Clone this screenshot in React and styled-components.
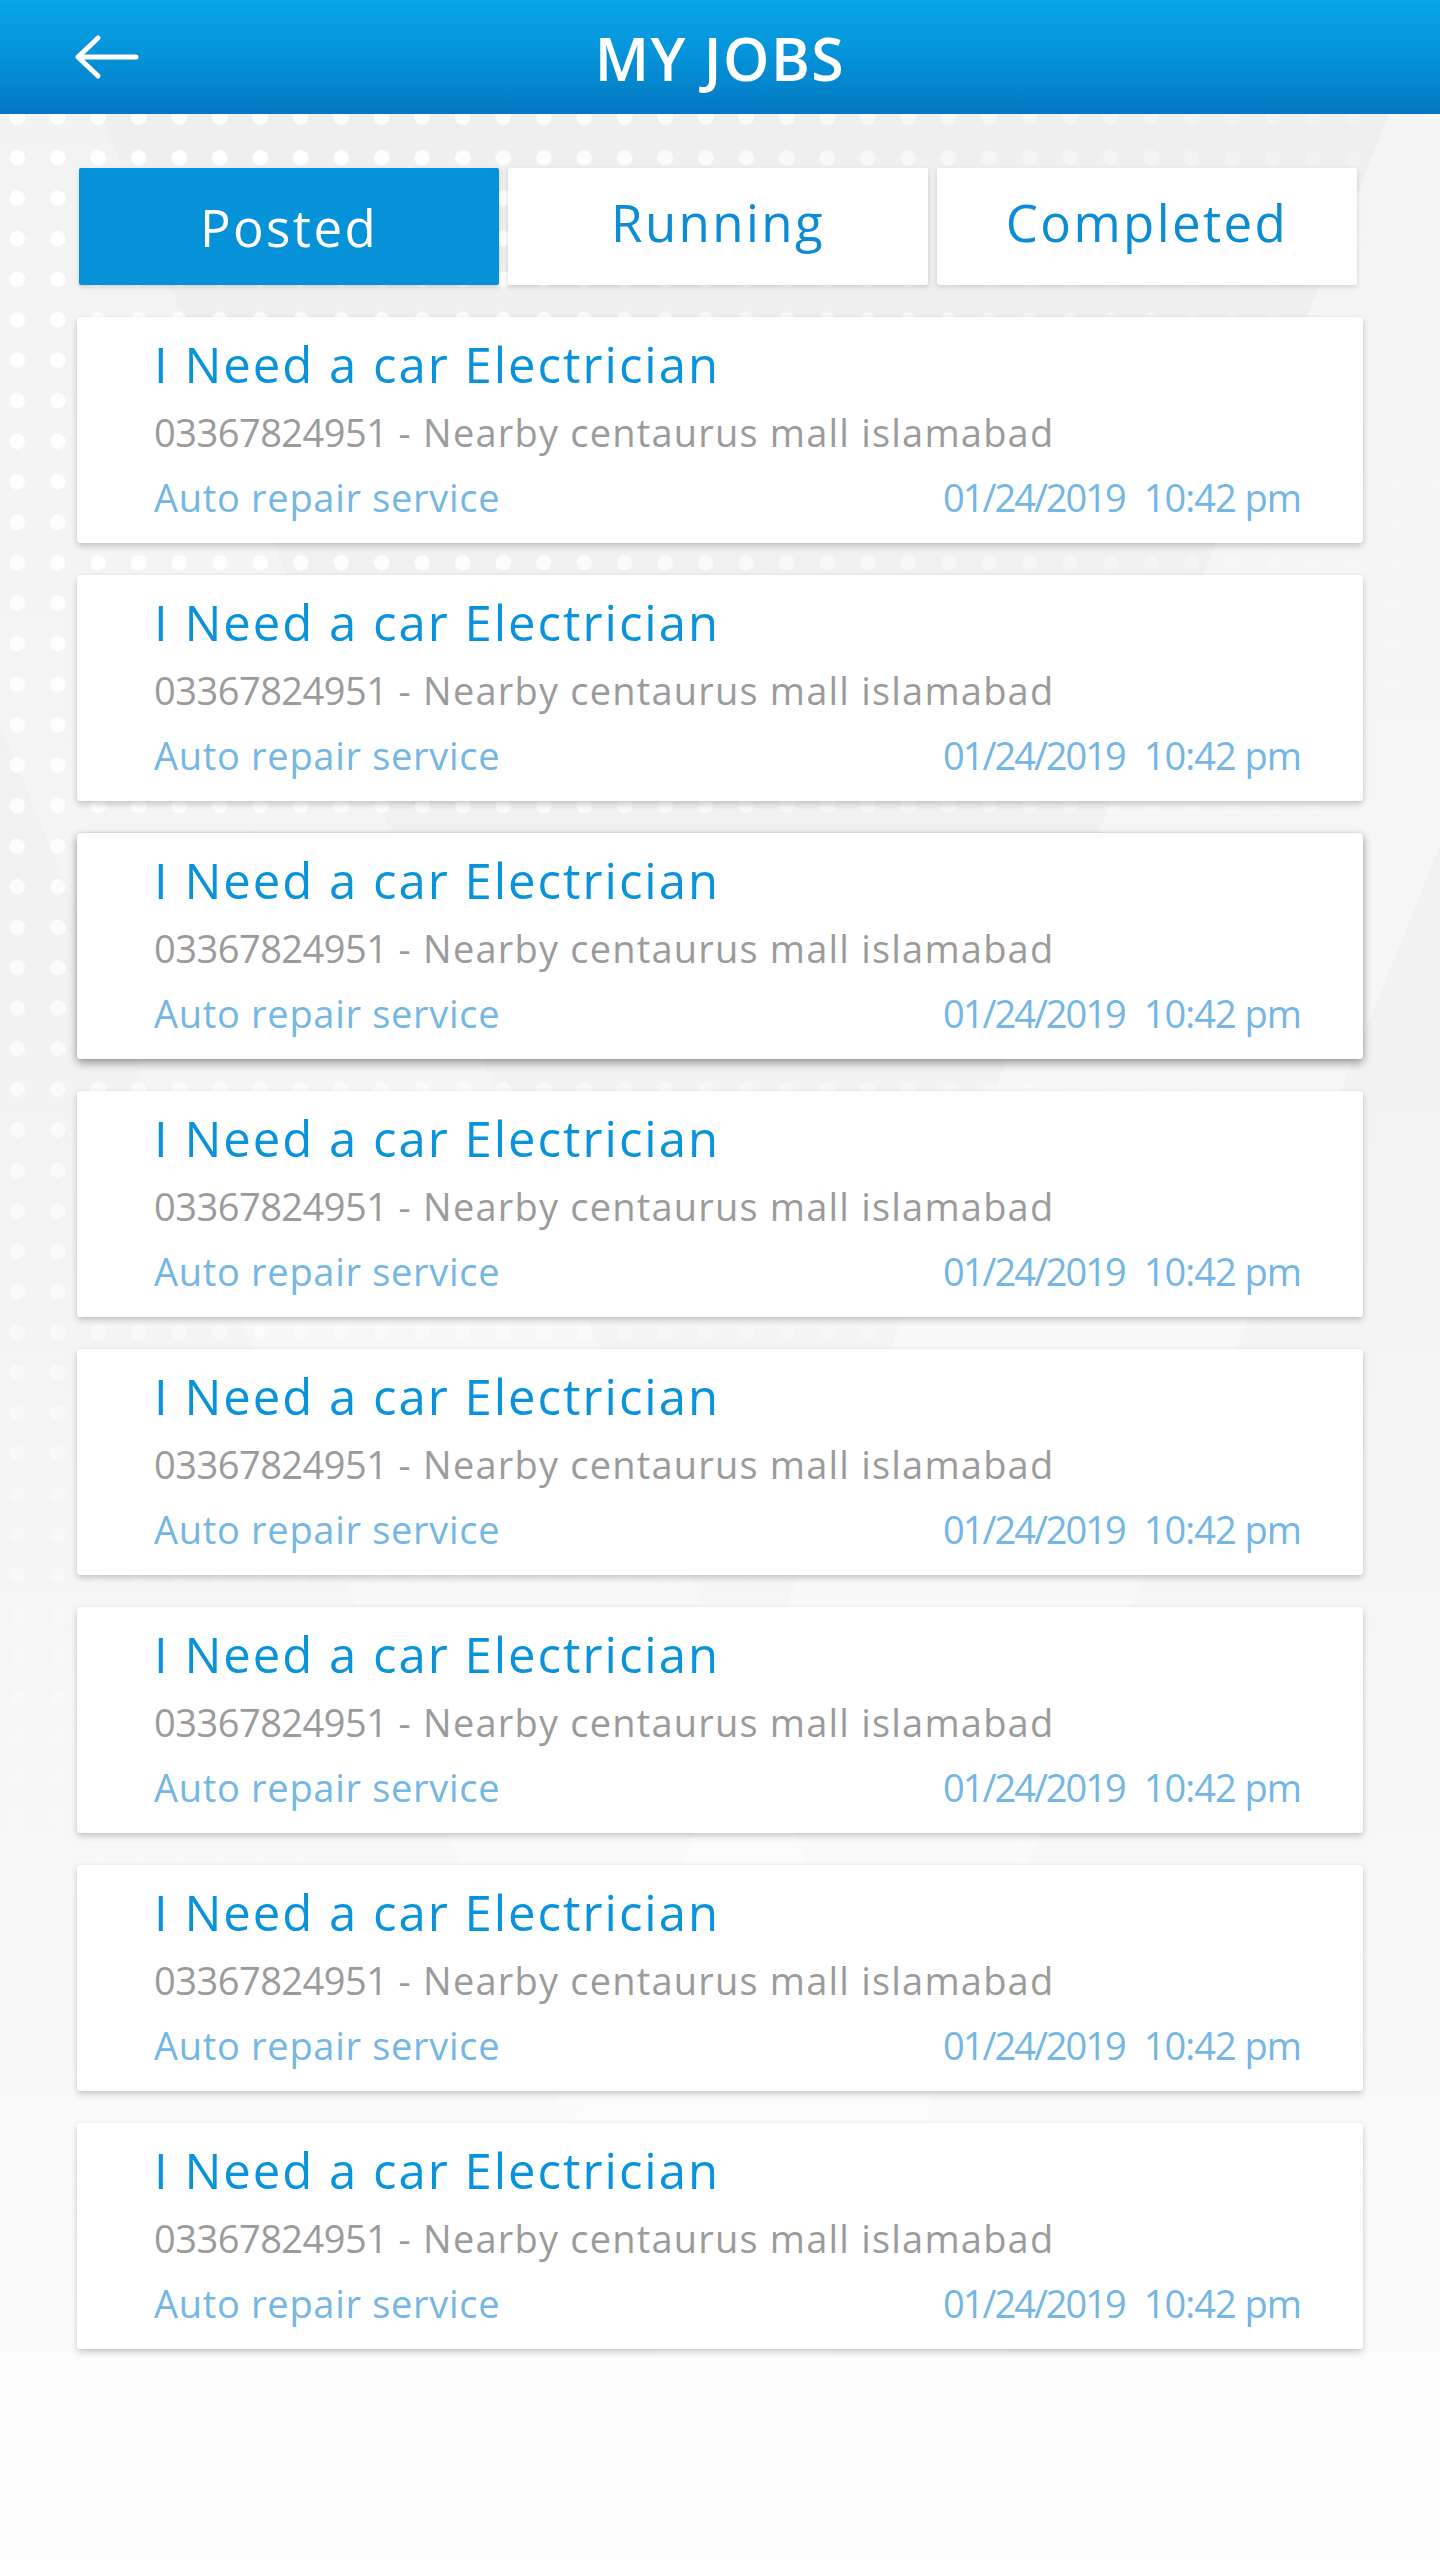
import React from "react";
import styled, { createGlobalStyle } from "styled-components";

const GlobalStyle = createGlobalStyle`
  html, body {
    margin: 0;
    padding: 0;
    background: #f4f4f4;
  }
  body {
    font-family: "Open Sans", "Noto Sans", "Liberation Sans", sans-serif;
    -webkit-font-smoothing: antialiased;
  }
  * { box-sizing: border-box; }
`;

const Page = styled.div`
  position: relative;
  width: 1440px;
  min-height: 2560px;
  overflow: hidden;
  background:
    linear-gradient(112deg, transparent 0 58%, rgba(255,255,255,0.35) 58% 72%, transparent 72%),
    linear-gradient(68deg, transparent 0 30%, rgba(255,255,255,0.25) 30% 44%, transparent 44%),
    linear-gradient(180deg, #eeeeee 0%, #f2f2f2 40%, #f8f8f8 75%, #fcfcfc 100%);

  &::before {
    content: "";
    position: absolute;
    top: 114px;
    left: 0;
    width: 1440px;
    height: 1900px;
    background-image: radial-gradient(circle at center, #ffffff 0 7px, rgba(255,255,255,0) 8.5px);
    background-size: 40.5px 40.5px;
    background-position: -3px -17px;
    -webkit-mask-image: radial-gradient(ellipse 1600px 2000px at 0 0, #000 0%, rgba(0,0,0,0.85) 35%, rgba(0,0,0,0.35) 70%, transparent 100%);
    mask-image: radial-gradient(ellipse 1600px 2000px at 0 0, #000 0%, rgba(0,0,0,0.85) 35%, rgba(0,0,0,0.35) 70%, transparent 100%);
    pointer-events: none;
  }
`;

const Header = styled.header`
  position: relative;
  z-index: 2;
  height: 114px;
  display: grid;
  grid-template-columns: 1fr auto 1fr;
  align-items: center;
  background: linear-gradient(180deg, #07a6e6 0%, #0592d8 50%, #0378c1 100%);
`;

const BackButton = styled.button`
  justify-self: start;
  margin-left: 73px;
  width: 68px;
  height: 48px;
  padding: 0;
  border: none;
  background: transparent;
  display: flex;
  align-items: center;
  justify-content: center;
  cursor: pointer;
`;

const HeaderTitle = styled.h1`
  margin: 0;
  color: #ffffff;
  font-family: "Open Sans", "Noto Sans", sans-serif;
  font-size: 59px;
  font-weight: 600;
  letter-spacing: 1.5px;
  line-height: 1;
  padding-top: 2px;
`;

const Content = styled.main`
  position: relative;
  z-index: 1;
  padding: 54px 77px 0 77px;
  display: flex;
  flex-direction: column;
  gap: 32px;
`;

const Tabs = styled.nav`
  display: grid;
  grid-template-columns: repeat(3, 420px);
  gap: 9px;
  margin-left: 2px;
`;

const Tab = styled.button`
  height: 117px;
  border: none;
  border-radius: 2px;
  padding: 0 0 ${(p) => (p.$active ? 0 : 10)}px 0;
  display: flex;
  align-items: center;
  justify-content: center;
  font-family: "Open Sans", "Noto Sans", sans-serif;
  font-size: 51px;
  font-weight: 500;
  letter-spacing: 2.4px;
  background: ${(p) => (p.$active ? "#0592d9" : "#ffffff")};
  color: ${(p) => (p.$active ? "#ffffff" : "#0b8cd5")};
  box-shadow: 0 2px 5px rgba(0, 0, 0, 0.14);
  cursor: pointer;
`;

const Card = styled.article`
  height: 226px;
  background: #ffffff;
  border-radius: 3px;
  padding: 17px 62px 22px 77px;
  box-shadow: ${(p) =>
    p.$raised
      ? "0 4px 10px rgba(0, 0, 0, 0.38), 0 0 3px rgba(0,0,0,0.12)"
      : "0 3px 6px rgba(0, 0, 0, 0.2), 0 0 2px rgba(0,0,0,0.06)"};
  display: flex;
  flex-direction: column;
`;

const Title = styled.h2`
  margin: 0;
  font-size: 49px;
  line-height: 60px;
  font-weight: 500;
  color: #0993dc;
  letter-spacing: 2px;
  white-space: nowrap;
`;

const Detail = styled.p`
  margin: 14px 0 0 0;
  font-size: 38px;
  line-height: 48px;
  font-weight: 400;
  color: #9b9b9b;
  letter-spacing: 1.2px;
  white-space: nowrap;
`;

const Phone = styled.span`
  letter-spacing: -0.5px;
`;

const MetaRow = styled.div`
  margin-top: 17px;
  display: flex;
  justify-content: space-between;
  align-items: baseline;
  font-size: 38px;
  line-height: 48px;
  font-weight: 400;
  color: #74b6e4;
  letter-spacing: 0.7px;
  white-space: nowrap;
`;

const DateTime = styled.span`
  display: flex;
  gap: 19px;
`;

const DatePart = styled.span`
  letter-spacing: ${(p) => p.$spacing}px;
`;

const BackArrow = () => (
  <svg width="66" height="46" viewBox="0 0 66 46" fill="none">
    <path
      d="M4 23 H62 M4 23 L24 4 M4 23 L24 42"
      stroke="#ffffff"
      strokeWidth="5"
      strokeLinecap="round"
      strokeLinejoin="round"
    />
  </svg>
);

const jobs = Array.from({ length: 8 }, (_, i) => ({
  id: i,
  title: "I Need a car Electrician",
  phone: "03367824951",
  location: "Nearby centaurus mall islamabad",
  category: "Auto repair service",
  date: "01/24/2019",
  time: "10:42 pm",
}));

export default function App() {
  return (
    <>
      <GlobalStyle />
      <Page>
        <Header>
          <BackButton aria-label="Back">
            <BackArrow />
          </BackButton>
          <HeaderTitle>MY JOBS</HeaderTitle>
          <span />
        </Header>
        <Content>
          <Tabs>
            <Tab $active>Posted</Tab>
            <Tab>Running</Tab>
            <Tab>Completed</Tab>
          </Tabs>
          {jobs.map((job, i) => (
            <Card key={job.id} $raised={i === 2}>
              <Title>{job.title}</Title>
              <Detail>
                <Phone>{job.phone}</Phone> - {job.location}
              </Detail>
              <MetaRow>
                <span>{job.category}</span>
                <DateTime>
                  <DatePart $spacing={-2}>{job.date}</DatePart>
                  <DatePart $spacing={-1}>{job.time}</DatePart>
                </DateTime>
              </MetaRow>
            </Card>
          ))}
        </Content>
      </Page>
    </>
  );
}
